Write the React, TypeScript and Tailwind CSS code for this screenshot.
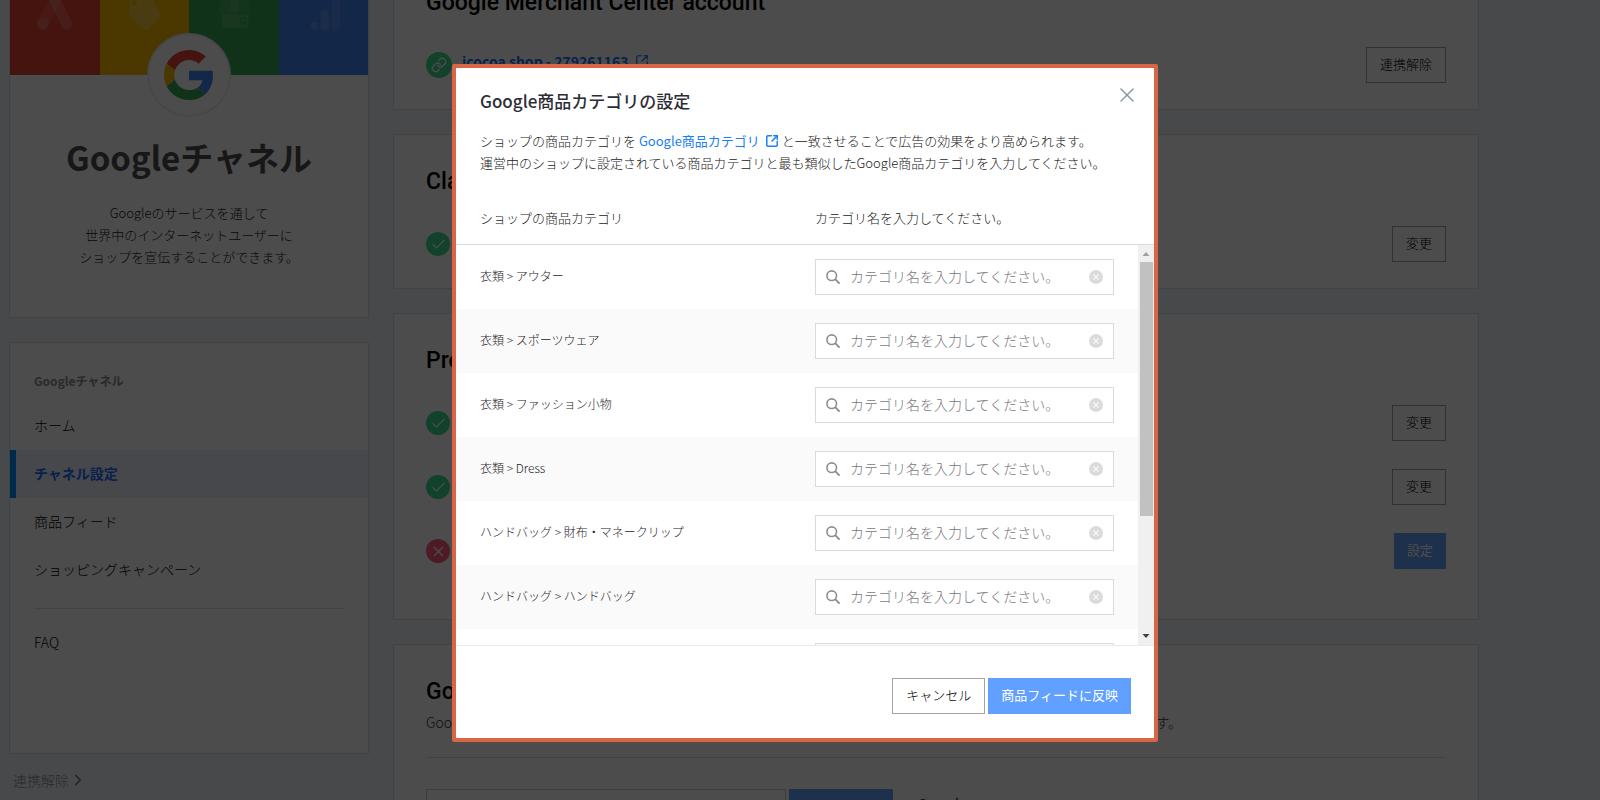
import { Check, ChevronRight, Link2, SquareArrowOutUpRight, X } from 'lucide-react';
import type { ReactNode } from 'react';

const categories = [
  '衣類 > アウター',
  '衣類 > スポーツウェア',
  '衣類 > ファッション小物',
  '衣類 > Dress',
  'ハンドバッグ > 財布・マネークリップ',
  'ハンドバッグ > ハンドバッグ',
  'ハンドバッグ > リュック',
];

const prompt = 'カテゴリ名を入力してください。';

function GoogleLogo() {
  return (
    <svg viewBox="0 0 48 48" className="size-[50px]" aria-hidden="true">
      <path fill="#EA4335" d="M24 9.5c3.54 0 6.71 1.22 9.21 3.6l6.85-6.85C35.9 2.38 30.47 0 24 0 14.62 0 6.51 5.38 2.56 13.22l7.98 6.19C12.43 13.72 17.74 9.5 24 9.5z" />
      <path fill="#4285F4" d="M46.98 24.55c0-1.57-.15-3.09-.38-4.55H24v9.02h12.94c-.58 2.96-2.26 5.48-4.78 7.18l7.73 6c4.51-4.18 7.09-10.36 7.09-17.65z" />
      <path fill="#FBBC05" d="M10.53 28.59c-.48-1.45-.76-2.99-.76-4.59s.27-3.14.76-4.59l-7.98-6.19C.92 16.46 0 20.12 0 24c0 3.88.92 7.54 2.56 10.78l7.97-6.19z" />
      <path fill="#34A853" d="M24 48c6.48 0 11.93-2.13 15.89-5.81l-7.73-6c-2.15 1.45-4.92 2.3-8.16 2.3-6.26 0-11.57-4.22-13.47-9.91l-7.98 6.19C6.51 42.62 14.62 48 24 48z" />
    </svg>
  );
}

function Banner() {
  return (
    <div className="grid h-[119px] grid-cols-4">
      <div className="bg-[#ea4335]">
        <svg viewBox="0 0 90 119" className="h-full w-full" aria-hidden="true">
          <path d="M50 34 33 68" stroke="#fff" strokeOpacity=".1" strokeWidth="11" strokeLinecap="round" />
          <path d="M40 34 57 68" stroke="#fff" strokeOpacity=".16" strokeWidth="11" strokeLinecap="round" />
          <circle cx="33" cy="68" r="6" fill="#fff" fillOpacity=".14" />
        </svg>
      </div>
      <div className="bg-[#fbb700]">
        <svg viewBox="0 0 90 119" className="h-full w-full" aria-hidden="true">
          <path
            fillRule="evenodd"
            fill="#fff"
            fillOpacity=".22"
            d="M29.500 34h17.500l13.500 22.500q2 2.500 0 4.500L49.500 73q-2.500 2.500-5 0L31 61.500q-1.500-1.500-1.500-4zM35 44.500a2.500 2.500 0 1 0 0 5 2.500 2.500 0 1 0 0-5z"
          />
        </svg>
      </div>
      <div className="bg-[#34a853]">
        <svg viewBox="0 0 90 119" className="h-full w-full" aria-hidden="true">
          <path d="M34 34h24l4 22q-3 3-6 0-3 3-6 0-4 3-8 0-3 3-6 0-3 3-6 0z" fill="#fff" fillOpacity=".1" />
          <path d="M42 34h8v22q-4 3-8 0z" fill="#fff" fillOpacity=".09" />
          <path d="M33 58h27v12q0 2-2 2H35q-2 0-2-2z" fill="#fff" fillOpacity=".14" />
          <path d="M57 63a3 3 0 1 0 .5 3H54.500" fill="none" stroke="#34a853" strokeWidth="1.200" />
        </svg>
      </div>
      <div className="bg-[#4285f4]">
        <svg viewBox="0 0 90 119" className="h-full w-full" aria-hidden="true">
          <circle cx="36" cy="70" r="4" fill="#fff" fillOpacity=".16" />
          <rect x="42" y="54" width="8" height="20" rx="4" fill="#fff" fillOpacity=".14" />
          <rect x="53" y="34" width="8" height="40" rx="4" fill="#fff" fillOpacity=".1" />
        </svg>
      </div>
    </div>
  );
}

function NavItem({ children, active = false }: { children: ReactNode; active?: boolean }) {
  return (
    <a
      href="#"
      aria-current={active ? 'page' : undefined}
      className={
        active
          ? 'flex h-12 items-center border-l-6 border-[#008cff] bg-[#eaf0ff] pb-0.5 pl-[18px] font-bold text-[#1a6dff]'
          : 'flex h-12 items-center pb-0.5 pl-6 font-light text-black'
      }
    >
      {children}
    </a>
  );
}

function Sidebar() {
  return (
    <aside className="flex w-[360px] shrink-0 flex-col gap-6">
      <section className="h-[363px] border border-[#d8e2e8] bg-white">
        <Banner />
        <div className="relative mx-auto -mt-[42px] flex size-[84px] items-center justify-center rounded-full border-2 border-[#eceef0] bg-white">
          <GoogleLogo />
        </div>
        <h1 className="mt-4 text-center text-[33px] leading-[48px] font-bold text-[#4d4d4d]">Googleチャネル</h1>
        <p className="mt-[21px] text-center text-[13px] leading-[22px] font-light text-[#222]">
          Googleのサービスを通して
          <br />
          世界中のインターネットユーザーに
          <br />
          ショップを宣伝することができます。
        </p>
      </section>
      <div>
        <nav className="h-[412px] border border-[#d8e2e8] bg-white pt-[26px] text-[14px]">
          <p className="pl-6 text-[12px] leading-6 font-bold text-[#8c8c8c]">Googleチャネル</p>
          <div className="mt-[9px]">
            <NavItem>ホーム</NavItem>
            <NavItem active>チャネル設定</NavItem>
            <NavItem>商品フィード</NavItem>
            <NavItem>ショッピングキャンペーン</NavItem>
          </div>
          <hr className="mx-6 mt-[14px] mb-[10px] border-[#d8e2e8]" />
          <NavItem>FAQ</NavItem>
        </nav>
        <a href="#" className="mt-4 ml-1 flex items-center text-[14px] leading-5 font-light text-[#8c8c8c]">
          連携解除
          <ChevronRight className="size-[18px] text-[#777]" strokeWidth={2.2} />
        </a>
      </div>
    </aside>
  );
}

function Status({ kind }: { kind: 'link' | 'ok' | 'error' }) {
  if (kind === 'link')
    return (
      <span className="flex size-[26px] items-center justify-center rounded-full bg-[#3cde8c]">
        <svg viewBox="0 0 24 24" className="size-4" fill="none" stroke="#fff" strokeWidth="2" strokeLinecap="round" strokeLinejoin="round" aria-hidden="true">
          <path d="M10 13a5 5 0 0 0 7.540.540l3-3a5 5 0 0 0-7.070-7.070l-1.720 1.710" />
          <path d="M14 11a5 5 0 0 0-7.540-.540l-3 3a5 5 0 0 0 7.070 7.070l1.710-1.710" />
        </svg>
      </span>
    );
  if (kind === 'ok')
    return (
      <span className="flex size-6 items-center justify-center rounded-full bg-[#3cde8c]">
        <Check className="size-[17px] text-white" strokeWidth={1.5} />
      </span>
    );
  return (
    <span className="flex size-6 items-center justify-center rounded-full bg-[#ff5c78]">
      <X className="size-[17px] text-white" strokeWidth={1.5} />
    </span>
  );
}

function OutlineButton({ children }: { children: ReactNode }) {
  return <button className="h-9 border border-[#a5a5a5] bg-white px-[13px] pb-0.5 text-[13px] font-light text-black">{children}</button>;
}

function BlueButton({ children }: { children: ReactNode }) {
  return <button className="h-9 bg-[#62a0ff] px-[13px] pb-0.5 text-[13px] font-normal text-white">{children}</button>;
}

function Card({ title, children }: { title: string; children: ReactNode }) {
  return (
    <section className="border border-[#d8e2e8] bg-white px-8 pt-[34px] pb-[26px]">
      <h2 className="font-['Roboto','Noto_Sans_CJK_JP',sans-serif] text-[23px] leading-[26px] font-medium text-black">{title}</h2>
      {children}
    </section>
  );
}

function Row({ kind, label, action }: { kind: 'link' | 'ok' | 'error'; label?: ReactNode; action: ReactNode }) {
  return (
    <div className="flex h-9 items-center">
      <Status kind={kind} />
      <div className="flex-1 pl-[10px]">{label}</div>
      {action}
    </div>
  );
}

function Page() {
  return (
    <div className="-mt-[45px] flex gap-6 pr-[121px] pl-[9px]">
      <Sidebar />
      <main className="flex flex-1 flex-col gap-6">
        <Card title="Google Merchant Center account">
          <div className="pt-[31px]">
            <Row
              kind="link"
              label={
                <a href="#" className="flex items-center gap-1.5 pb-2 text-[14px] font-bold text-[#1a6dff]">
                  jcocoa shop - 279261163
                  <SquareArrowOutUpRight className="size-[14px]" />
                </a>
              }
              action={<OutlineButton>連携解除</OutlineButton>}
            />
          </div>
        </Card>
        <Card title="Claim">
          <div className="pt-[31px]">
            <Row kind="ok" action={<OutlineButton>変更</OutlineButton>} />
          </div>
        </Card>
        <Card title="Product">
          <div className="flex flex-col gap-7 pt-[31px] pb-6">
            <Row kind="ok" action={<OutlineButton>変更</OutlineButton>} />
            <Row kind="ok" action={<OutlineButton>変更</OutlineButton>} />
            <Row kind="error" action={<BlueButton>設定</BlueButton>} />
          </div>
        </Card>
        <Card title="Google">
          <div className="mt-[5px] flex w-[756px] justify-between text-[14px] leading-6 font-light text-[#333]">
            <span>Google</span>
            <span>ます。</span>
          </div>
          <hr className="mt-[23px] mb-[31px] border-[#d8e2e8]" />
          <div className="flex items-start">
            <input aria-label="Google" className="h-9 w-[360px] border border-[#ccc] bg-white" />
            <button aria-label="Google" className="ml-[3px] h-9 w-[104px] bg-[#62a0ff]" />
            <a href="#" className="mt-[3px] ml-6 text-[15px] leading-6 font-medium text-[#1a4fbf]">
              Google
            </a>
          </div>
        </Card>
      </main>
    </div>
  );
}

function CategoryRow({ name, index }: { name: string; index: number }) {
  const id = `category-${index}`;
  return (
    <tr className="h-16 even:bg-[#fafafa]">
      <th scope="row" className="pb-0.5 pl-6 text-left text-[12px] font-light text-[#1c1c28]">
        <label htmlFor={id}>{name}</label>
      </th>
      <td className="w-[323px] pr-6">
        <div className="flex h-9 items-center border border-[#d9dadc] bg-white px-[10px]">
          <svg viewBox="0 0 14 14" className="size-[14px] shrink-0" fill="none" stroke="#8c8c92" aria-hidden="true">
            <circle cx="5.700" cy="5.700" r="4.800" strokeWidth="1.600" />
            <path d="m9.200 9.200 4.400 4.400" strokeWidth="1.900" />
          </svg>
          <input
            id={id}
            placeholder={prompt}
            className="ml-[10px] min-w-0 flex-1 bg-transparent pb-0.5 text-[14px] font-light outline-none placeholder:text-[#77777c]"
          />
          <button aria-label="クリア" className="flex size-[14px] items-center justify-center rounded-full bg-[#dcdcdc]">
            <X className="size-[10px] text-white" strokeWidth={2.5} />
          </button>
        </div>
      </td>
    </tr>
  );
}

function Scrollbar() {
  return (
    <div className="flex w-4 shrink-0 flex-col items-center bg-[#f0f0f0]" aria-hidden="true">
      <svg viewBox="0 0 16 17" className="h-[17px] w-4">
        <path d="M4.500 11 8 7l3.500 4z" fill="#a0a0a0" />
      </svg>
      <div className="h-[254px] w-[13px] bg-[#c1c1c1]" />
      <svg viewBox="0 0 16 17" className="mt-auto h-[17px] w-4">
        <path d="M4.500 6 8 10l3.500-4z" fill="#404040" />
      </svg>
    </div>
  );
}

function CategoryDialog() {
  return (
    <div
      role="dialog"
      aria-modal="true"
      aria-labelledby="dialog-title"
      className="flex w-[706px] flex-col rounded-[2px] border-4 border-[#d96545] bg-white"
    >
      <header className="flex items-start justify-between pt-5 pr-[15px] pl-6">
        <h2 id="dialog-title" className="text-[17px] leading-[26px] font-medium text-[#2d2d37]">
          Google商品カテゴリの設定
        </h2>
        <button aria-label="閉じる" className="-mt-[5px]">
          <X className="size-6 text-[#8996a8]" strokeWidth={1.5} />
        </button>
      </header>
      <p className="mt-4 pl-6 text-[13px] leading-[22px] font-light text-[#222]">
        ショップの商品カテゴリを{' '}
        <a href="#" className="font-normal text-[#1b80f5]">
          Google商品カテゴリ <SquareArrowOutUpRight className="-mt-0.5 ml-0.5 inline size-[14px]" strokeWidth={2.6} />
        </a>{' '}
        と一致させることで広告の効果をより高められます。
        <br />
        運営中のショップに設定されている商品カテゴリと最も類似したGoogle商品カテゴリを入力してください。
      </p>
      <div className="mt-[33px] flex h-[38px] border-b border-[#cfdde3] pr-10 pl-6 text-[13px] leading-[22px] font-light text-[#222]">
        <span className="flex-1">ショップの商品カテゴリ</span>
        <span className="w-[299px]">{prompt}</span>
      </div>
      <div className="flex h-[400px]">
        <div className="min-w-0 flex-1 overflow-hidden">
          <table className="w-full border-collapse">
            <tbody>
              {categories.map((name, index) => (
                <CategoryRow key={name} name={name} index={index} />
              ))}
            </tbody>
          </table>
        </div>
        <Scrollbar />
      </div>
      <footer className="flex justify-end gap-[3px] border-t border-[#e8eaec] pt-8 pr-[23px] pb-6">
        <OutlineButton>キャンセル</OutlineButton>
        <BlueButton>商品フィードに反映</BlueButton>
      </footer>
    </div>
  );
}

export default function App() {
  return (
    <div className="h-screen overflow-hidden bg-[#f0f5f8] font-['Noto_Sans_CJK_JP',sans-serif]">
      <Page />
      <div className="fixed inset-0 flex items-center justify-center bg-black/70 pt-1.5 pl-2.5">
        <CategoryDialog />
      </div>
    </div>
  );
}
